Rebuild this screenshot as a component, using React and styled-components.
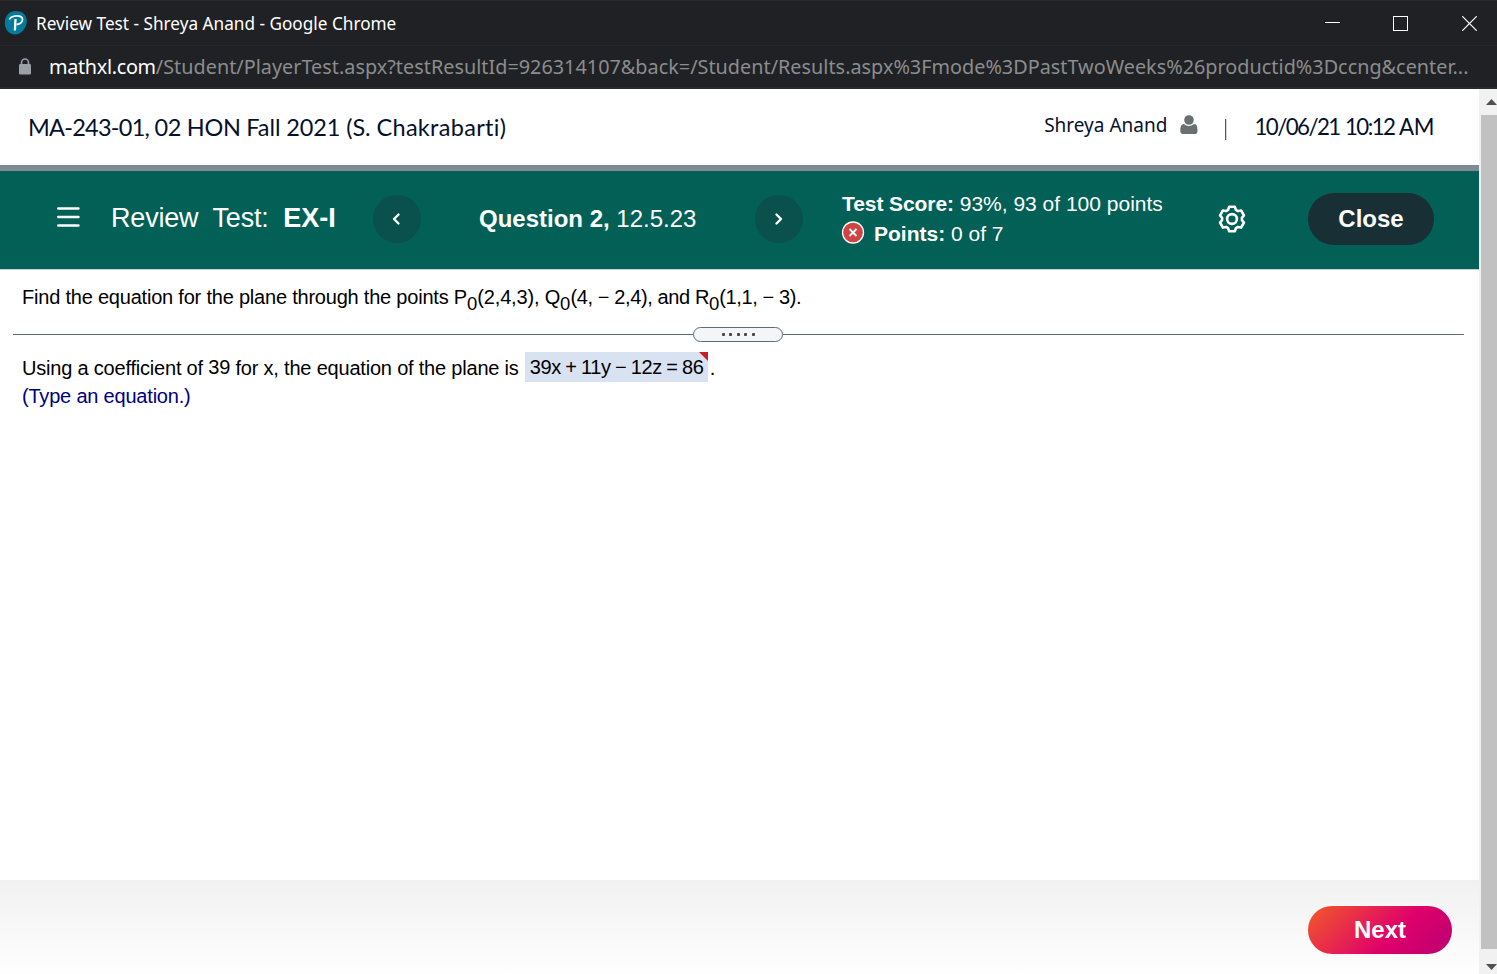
import React from "react";
import styled, { createGlobalStyle } from "styled-components";

const Global = createGlobalStyle`
  *{box-sizing:border-box}
  body{margin:0;background:#fff;overflow:hidden}
  svg{flex:none}
`;
const sans = `"Liberation Sans", Arial, sans-serif`;

const Window = styled.div`
  width:1497px;height:974px;display:flex;flex-direction:column;background:#fff;color:#000;font-family:${sans};
`;
const TitleBar = styled.header`
  height:45px;background:#202124;border-top:1px solid #292a2a;color:#fff;display:flex;align-items:center;
  justify-content:space-between;padding:0 20px 0 4px;
`;
const TitleGroup = styled.div`display:flex;align-items:center;gap:8px;`;
const Text = styled.span`
  font-family:${p => p.$font || sans};
  font-size:${p => p.$size}px;
  font-weight:${p => p.$weight || 400};
  letter-spacing:${p => p.$track || 0}px;
  word-spacing:${p => p.$words || 0}px;
  color:${p => p.$color || "inherit"};
  line-height:1.2;white-space:pre;
`;
const WindowTitle = styled(Text)`padding-top:2px;`;
const Controls = styled.div`display:flex;align-items:center;gap:53px;& > :last-child{margin-left:1px}`;
const AddressBar = styled.div`
  height:44px;background:#202124;border-top:1px solid #27282b;border-bottom:2px solid #2a2a2d;
  display:flex;align-items:center;padding:0 0 0 18px;gap:17px;
`;
const Body = styled.div`flex:1;display:flex;min-height:0;`;
const Page = styled.main`width:1479px;display:flex;flex-direction:column;`;
const CourseBar = styled.div`
  height:82px;border-bottom:6px solid #7f8a95;display:flex;justify-content:space-between;padding:0 45px 0 28px;align-items:center;color:#05112a;
`;
const CourseName = styled.div`display:flex;`;
const UserInfo = styled.div`display:flex;align-items:center;`;
const UserName = styled.div`display:flex;align-items:center;gap:13px;padding-bottom:4px;`;
const DateText = styled.div`padding-top:1px;`;
const Separator = styled.div`width:2px;height:21px;margin:4px 27px 0 27px;background:#7a4a3f;border-right:1px solid #d9d2d0;`;
const TestBar = styled.nav`
  height:99px;background:#036056;border-bottom:1px solid #c5d3d8;color:#fff;display:flex;align-items:center;padding:0 45px 0 57px;
`;
const Menu = styled.div`display:flex;padding-bottom:7px;`;
const TestTitle = styled.div`width:225px;margin-left:31px;padding-bottom:4px;white-space:nowrap;`;
const RoundButton = styled.button`
  width:48px;height:48px;border-radius:50%;border:0;padding:0;background:#0a504c;display:grid;place-items:center;margin-left:${p => p.$gap}px;
  margin-top:-3px;
`;
const QuestionTitle = styled.div`width:218px;margin-left:58px;margin-top:-2px;white-space:nowrap;`;
const Score = styled.div`width:322px;margin-left:39px;margin-top:-3px;`;
const ScoreLine = styled.div`height:30px;display:flex;align-items:center;`;
const ScoreMark = styled.div`display:flex;padding-bottom:2px;`;
const Gear = styled.div`display:flex;margin:-2px 0 0 53px;`;
const CloseButton = styled.button`
  width:126px;height:52px;border:0;border-radius:26px;background:#182f36;color:#fff;margin-left:auto;margin-top:-3px;padding:2px 0 0;
`;
const Exercise = styled.section`height:610px;padding:0 15px 0 13px;`;
const Prompt = styled.div`height:56px;padding:0 9px 3px;display:flex;align-items:center;white-space:pre;`;
const Sub = styled.span`
  font-size:18.5px;line-height:1;transform:translateY(6px);display:inline-block;letter-spacing:0;
`;
const Divider = styled.div`
  height:17px;display:flex;align-items:center;
  &::before,&::after{content:"";height:1px;background:#5d6c7b;}
  &::before{width:680px}
  &::after{flex:1}
`;
const Handle = styled.div`
  width:90px;height:15px;border:1px solid #5d6c7b;border-radius:8px;background:#f4f5f7;display:flex;align-items:center;justify-content:center;gap:4.5px;
`;
const Dot = styled.i`width:3px;height:3px;border-radius:1px;background:#444;`;
const AnswerLine = styled.div`height:32px;margin-top:9px;padding-left:9px;display:flex;align-items:center;`;
const Raised = styled.span`display:inline-block;transform:translateY(-1px);`;
const Answer = styled.div`
  position:relative;width:183px;height:30px;margin:-2px 2px 0 6px;padding-left:5px;background:#d9e2f1;display:flex;align-items:center;
`;
const WrongCorner = styled.i`
  position:absolute;right:0;top:0;border-top:9px solid #c81e28;border-left:9px solid transparent;
`;
const Hint = styled.div`padding-left:9px;height:24px;display:flex;align-items:center;`;
const Footer = styled.footer`
  flex:1;background:linear-gradient(#f1f1f1,#fefefe);display:flex;justify-content:flex-end;padding:26px 27px 0 0;
`;
const NextButton = styled.button`
  width:144px;height:48px;border:0;border-radius:24px;padding:0;color:#fff;
  background:linear-gradient(135deg,#f0532d 5%,#df006b 60%,#be0071 95%);box-shadow:0 0 3px 2px #f8f8f8;
`;
const ScrollTrack = styled.aside`
  width:18px;background:#f1f1f1;padding-left:2px;display:flex;flex-direction:column;overflow:hidden;
`;
const ScrollArrow = styled.div`height:${p => p.$height}px;flex:none;display:flex;align-items:center;padding:${p => p.$drop || 0}px 0 0 5px;`;
const Thumb = styled.div`height:834px;flex:none;background:#c1c1c1;`;

const noto = `"Noto Sans", "Open Sans", sans-serif`;
const lato = `Lato, sans-serif`;

// Six-toothed outline: two tooth corners and a two-point valley for every 60 degrees.
const gearPoints = Array.from({ length: 6 }, (_, i) =>
  [[-13, 12.5], [13, 12.5], [23, 10], [37, 10]].map(([deg, r]) => {
    const a = ((i * 60 + deg) * Math.PI) / 180;
    return `${(15 + r * Math.sin(a)).toFixed(2)},${(15 - r * Math.cos(a)).toFixed(2)}`;
  }).join(" ")
).join(" ");

function Chevron({ d }) {
  return <svg width="12" height="14" viewBox="0 0 12 14" fill="none" stroke="#fff" strokeWidth="2.4" strokeLinecap="round" strokeLinejoin="round"><path d={d} /></svg>;
}

export default function App() {
  return (
    <Window>
      <Global />
      <TitleBar>
        <TitleGroup>
          <svg width="24" height="24" viewBox="0 0 24 24">
            <path d="M11.500 0C18 0 22 3 22.800 9C23.500 15 18 23.500 12 23.500C5 24 .8 18 .8 12C.8 5 5 0 11.500 0Z" fill="#047a9c" />
            <path d="M10.900 19.500L11.500 8" stroke="#fff" strokeWidth="2.300" />
            <path d="M5.500 8.500C7 4.500 18.500 3 18.500 8.500C18.500 12 15 13.500 12.500 13.500" fill="none" stroke="#fff" strokeWidth="1.800" />
          </svg>
          <WindowTitle $font={noto} $size={17.2}>Review Test - Shreya Anand - Google Chrome</WindowTitle>
        </TitleGroup>
        <Controls>
          <svg width="15" height="15" viewBox="0 0 15 15"><path d="M0 6.500H15" stroke="#fff" /></svg>
          <svg width="15" height="15" viewBox="0 0 15 15"><rect x=".5" y=".5" width="14" height="14" fill="none" stroke="#fff" /></svg>
          <svg width="15" height="15" viewBox="0 0 15 15"><path d="M.3 .3L14.700 14.700M14.700 .3L.3 14.700" stroke="#fff" strokeWidth="1.200" /></svg>
        </Controls>
      </TitleBar>
      <AddressBar>
        <svg width="14" height="17" viewBox="0 0 14 17"><path d="M3.500 7V4.500a3.500 3.500 0 0 1 7 0V7" fill="none" stroke="#9aa0a6" strokeWidth="1.600" /><rect x="1" y="6" width="12" height="10.500" rx="1.300" fill="#9aa0a6" /></svg>
        <Text $font={noto} $size={19.8}>
          <Text $font={noto} $size={19.8} $track={-0.3} $color="#fff">mathxl.com</Text>
          <Text $font={noto} $size={19.8} $track={0.03} $color="#8b8d8f">/Student/PlayerTest.aspx?testResultId=926314107&amp;back=/Student/Results.aspx%3Fmode%3DPastTwoWeeks%26productid%3Dccng&amp;center...</Text>
        </Text>
      </AddressBar>
      <Body>
        <Page>
          <CourseBar>
            <CourseName>
              <Text $font={lato} $size={23.5} $track={-0.75}>MA-243-01, </Text>
              <Text $font={lato} $size={23.5} $track={-0.3}>02 HON </Text>
              <Text $font={lato} $size={23.5} $track={-0.1}>Fall 2021 (S. </Text>
              <Text $font={lato} $size={23.5} $track={0.3}>Chakrabarti)</Text>
            </CourseName>
            <UserInfo>
              <UserName>
                <Text $font={noto} $size={19}>Shreya Anand</Text>
                <svg width="18" height="20" viewBox="0 0 18 20" fill="#6a7070"><circle cx="9" cy="5" r="4.800" /><path d="M4 9C1 9 .3 12 .3 16C.3 18 1.500 19 3 19H15C16.500 19 17.500 18 17.500 16C17.500 12 17 9 14 9C11 11.500 7 11.500 4 9Z" /></svg>
              </UserName>
              <Separator />
              <DateText><Text $font={lato} $size={22.3} $track={-1.55} $words={1}>10/06/21 10:12</Text><Text $font={lato} $size={22.3} $track={-0.4}> AM</Text></DateText>
            </UserInfo>
          </CourseBar>
          <TestBar>
            <Menu><svg width="23" height="22" viewBox="0 0 23 22" stroke="#fff" strokeWidth="2.400" strokeLinecap="round"><path d="M1.200 2.500H21.500M1.200 11H21.500M1.200 19.500H21.500" /></svg></Menu>
            <TestTitle><Text $size={27} $track={-0.19}>Review  Test:  </Text><Text $size={27} $weight={700}>EX-I</Text></TestTitle>
            <RoundButton $gap={37}><Chevron d="M7.500 2.500L3 7L7.500 11.500" /></RoundButton>
            <QuestionTitle><Text $size={24} $weight={700}>Question 2, </Text><Text $size={24}>12.5.23</Text></QuestionTitle>
            <RoundButton $gap={58}><Chevron d="M3.500 2.500L8 7L3.500 11.500" /></RoundButton>
            <Score>
              <ScoreLine><Text $size={21} $weight={700} $track={-0.08}>Test Score: </Text><Text $size={21}>93%, 93 of 100 points</Text></ScoreLine>
              <ScoreLine>
                <ScoreMark><svg width="32" height="24" viewBox="0 0 32 24"><circle cx="11" cy="11.500" r="10.500" fill="#d04444" stroke="#fff" strokeWidth="1.300" /><path d="M7.500 8L14.500 15M14.500 8L7.500 15" stroke="#fff" strokeWidth="1.900" /></svg></ScoreMark>
                <Text $size={21} $weight={700}>Points: </Text><Text $size={21}>0 of 7</Text>
              </ScoreLine>
            </Score>
            <Gear>
              <svg width="30" height="30" viewBox="0 0 30 30" fill="none" stroke="#fff" strokeWidth="2.600" strokeLinejoin="round"><circle cx="15" cy="15" r="4.900" /><polygon points={gearPoints} /></svg>
            </Gear>
            <CloseButton><Text $size={24} $weight={700}>Close</Text></CloseButton>
          </TestBar>
          <Exercise>
            <Prompt>
              <Text $size={20} $track={-0.21}>Find the equation for the plane through the points </Text>
              <Text $size={20} $track={-0.17}>P<Sub>0</Sub>(2,4,3), Q<Sub>0</Sub></Text>
              <Text $size={20} $track={-0.38}>(4, − 2,4), and R<Sub>0</Sub>(1,1, − 3).</Text>
            </Prompt>
            <Divider><Handle><Dot /><Dot /><Dot /><Dot /><Dot /></Handle></Divider>
            <AnswerLine>
              <Text $size={20} $track={-0.2}>Using a coefficient of <Raised>39</Raised> for x, the equation of the plane is</Text>
              <Answer><Text $size={20} $track={-0.3} $words={-1}>39x + 11y − 12z = 86</Text><WrongCorner /></Answer>
              <Text $size={20}>.</Text>
            </AnswerLine>
            <Hint><Text $size={20} $track={-0.2} $color="#000080">(Type an equation.)</Text></Hint>
          </Exercise>
          <Footer><NextButton><Text $size={24} $weight={700}>Next</Text></NextButton></Footer>
        </Page>
        <ScrollTrack>
          <ScrollArrow $height={26}><svg width="11" height="6" viewBox="0 0 11 6"><path d="M0 6L5.500 0L11 6Z" fill="#505050" /></svg></ScrollArrow>
          <Thumb />
          <ScrollArrow $height={25} $drop={10}><svg width="11" height="6" viewBox="0 0 11 6"><path d="M0 0L5.500 6L11 0Z" fill="#505050" /></svg></ScrollArrow>
        </ScrollTrack>
      </Body>
    </Window>
  );
}
